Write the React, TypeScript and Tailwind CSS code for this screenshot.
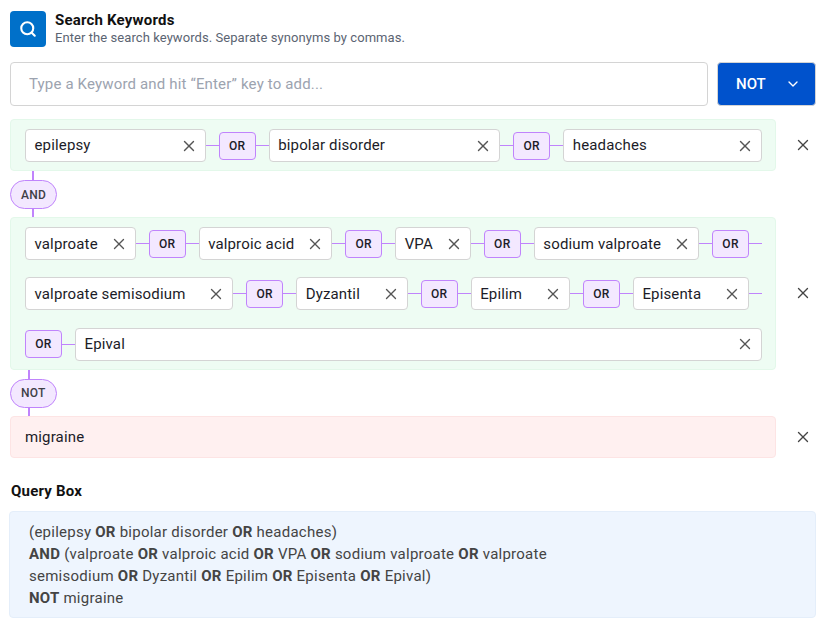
import { ChevronDown, Search, X } from "lucide-react";

function Keyword({ label }: { label: string }) {
  return (
    <div className="flex h-[33px] grow items-center justify-between rounded-[4px] border border-[#d4d4d4] bg-white pl-[8.5px] pr-[7px] text-[15px] tracking-[0.15px] text-[#1c1c28]">
      <span className="whitespace-nowrap">{label}</span>
      <X size={18} strokeWidth={1.8} className="ml-[7.5px] shrink-0 text-[#555]" />
    </div>
  );
}

function Line() {
  return <div className="h-px w-[13px] shrink-0 bg-[#c084fc]" />;
}

function OrBadge() {
  return (
    <div className="flex h-[28px] w-[37px] shrink-0 items-center justify-center rounded-[4px] border border-[#c084fc] bg-[#f3e8ff] text-[12px] font-medium tracking-[0.3px] text-[#1c1c28]">
      OR
    </div>
  );
}

function Or() {
  return (
    <>
      <Line />
      <OrBadge />
      <Line />
    </>
  );
}

function Row({ items, children }: { items: string[]; children?: React.ReactNode }) {
  return (
    <div className="flex items-center">
      {items.map((item, i) => (
        <div key={item} className="contents">
          {i > 0 && <Or />}
          <Keyword label={item} />
        </div>
      ))}
      {children}
    </div>
  );
}

function Remove() {
  return (
    <div className="flex w-[40px] shrink-0 items-center justify-end pr-[4px]">
      <X size={18} strokeWidth={1.8} className="text-[#444]" />
    </div>
  );
}

function Joiner({ label, className }: { label: string; className: string }) {
  return (
    <div className="flex flex-col items-start">
      <div className={`h-[9px] w-[2px] bg-[#c084fc] ${className}`} />
      <div className="flex h-[29px] items-center justify-center rounded-full border border-[#c084fc] bg-[#f3e8ff] px-[10px] text-[12px] font-medium tracking-[0.3px] text-[#3f3f46]">
        {label}
      </div>
      <div className={`h-[8px] w-[2px] bg-[#c084fc] ${className}`} />
    </div>
  );
}

export default function App() {
  return (
    <div className="w-[827px] bg-white pl-[10px] pr-[11px] pt-[11px] font-['Roboto',sans-serif]">
      <div className="flex gap-[9px]">
        <div className="flex h-[36px] w-[36px] items-center justify-center rounded-[4px] bg-[#0070c9] text-white">
          <Search size={18} strokeWidth={2.8} />
        </div>
        <div>
          <h1 className="text-[15px] leading-[18px] font-bold tracking-[0.2px] text-[#111]">Search Keywords</h1>
          <p className="text-[13px] leading-[18px] tracking-[0.07px] text-[#5b6472]">
            Enter the search keywords. Separate synonyms by commas.
          </p>
        </div>
      </div>

      <div className="mt-[15px] flex h-[44px] gap-[9px]">
        <div className="flex grow items-center rounded-[4px] border border-[#d4d4d4] pl-[18px] text-[15px] tracking-[0.16px] text-[#9ca3af]">
          Type a Keyword and hit “Enter” key to add...
        </div>
        <button className="flex w-[99px] items-center justify-between rounded-[4px] border border-[#d4d4d4] bg-[#0052cc] pl-[18px] pr-[14px] text-[15px] font-medium text-white">
          NOT
          <ChevronDown size={16} strokeWidth={2} />
        </button>
      </div>

      <div className="mt-[13px] flex">
        <div className="w-[766px] shrink-0 rounded-[4px] border border-[#e3f8ea] bg-[#eefcf3] pb-[8px] pl-[14px] pr-[13px] pt-[9px]">
          <Row items={["epilepsy", "bipolar disorder", "headaches"]} />
        </div>
        <Remove />
      </div>

      <Joiner label="AND" className="ml-[22px]" />

      <div className="flex">
        <div className="flex w-[766px] shrink-0 flex-col rounded-[4px] border border-[#e3f8ea] bg-[#eefcf3] pb-[8.2px] pl-[14px] pr-[13px] pt-[9.3px]">
          <Row items={["valproate", "valproic acid", "VPA", "sodium valproate"]}>
            <Or />
          </Row>
          <div className="mt-[17px]">
            <Row items={["valproate semisodium", "Dyzantil", "Epilim", "Episenta"]}>
              <Line />
            </Row>
          </div>
          <div className="mt-[17.5px] flex items-center">
            <OrBadge />
            <Line />
            <Keyword label="Epival" />
          </div>
        </div>
        <Remove />
      </div>

      <Joiner label="NOT" className="ml-[18px]" />

      <div className="flex">
        <div className="flex h-[42px] w-[766px] shrink-0 items-center rounded-[4px] border border-[#fde4e4] bg-[#fff0f0] px-[14px] text-[15px] tracking-[0.15px] text-[#1c1c28]">
          migraine
        </div>
        <Remove />
      </div>

      <h2 className="ml-px mt-[24px] text-[15px] leading-[18px] font-bold tracking-[0.2px] text-[#111]">Query Box</h2>
      <div className="-ml-px mt-[11px] rounded-[4px] border border-[#e4eefa] bg-[#eef5fe] pb-[8px] pl-[19px] pr-[19px] pt-[9px] text-[15px] leading-[22px] tracking-[0.25px] text-[#444]">
        (epilepsy <b>OR</b> bipolar disorder <b>OR</b> headaches)
        <br />
        <b>AND</b> (valproate <b>OR</b> valproic acid <b>OR</b> VPA <b>OR</b> sodium valproate <b>OR</b> valproate
        <br />
        semisodium <b>OR</b> Dyzantil <b>OR</b> Epilim <b>OR</b> Episenta <b>OR</b> Epival)
        <br />
        <b>NOT</b> migraine
      </div>
    </div>
  );
}
